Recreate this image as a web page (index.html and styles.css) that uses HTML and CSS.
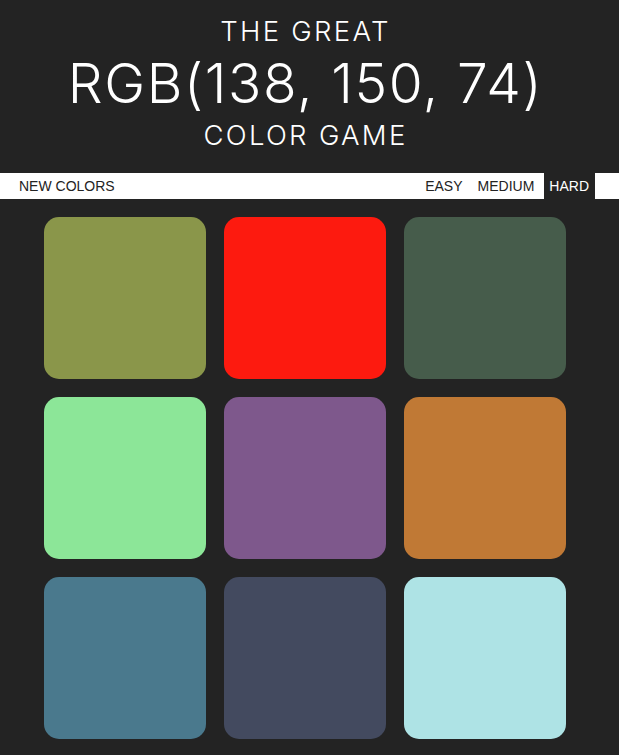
FILE: index.html
```html
<!DOCTYPE html>
<html lang="en">
<head>
<meta charset="utf-8">
<title>The Great Color Game</title>
<link rel="stylesheet" href="styles.css">
</head>
<body>
  <header class="header">
    <h1 class="title">
      <span class="title-small">THE GREAT</span>
      <span class="title-rgb">RGB(138, 150, 74)</span>
      <span class="title-small">COLOR GAME</span>
    </h1>
  </header>
  <nav class="stripe">
    <button class="btn">NEW COLORS</button>
    <div class="modes">
      <button class="btn">EASY</button>
      <button class="btn">MEDIUM</button>
      <button class="btn selected">HARD</button>
    </div>
  </nav>
  <main class="grid">
    <div class="square" style="background:#8a964a"></div>
    <div class="square" style="background:#fd1a0f"></div>
    <div class="square" style="background:#465c4b"></div>
    <div class="square" style="background:#8ce698"></div>
    <div class="square" style="background:#7e588c"></div>
    <div class="square" style="background:#c07935"></div>
    <div class="square" style="background:#4a798d"></div>
    <div class="square" style="background:#434a5f"></div>
    <div class="square" style="background:#aee3e5"></div>
  </main>
</body>
</html>
```
FILE: styles.css
```css
* { box-sizing: border-box; }
html, body { margin: 0; padding: 0; }
body {
  background: #232323;
  width: 619px;
  height: 755px;
  overflow: hidden;
}
.header {
  height: 173px;
  padding: 14px 8px 0 0;
  color: #ffffff;
  text-align: center;
  font-family: Inter, "DejaVu Sans", sans-serif;
  font-weight: 300;
}
.title { margin: 0; font-weight: 300; }
.title-small {
  display: block;
  font-size: 27.5px;
  line-height: 34px;
  letter-spacing: 2.3px;
}
.title-rgb {
  display: block;
  font-size: 55px;
  line-height: 70px;
  letter-spacing: 1.6px;
}
.stripe {
  display: flex;
  justify-content: space-between;
  align-items: stretch;
  height: 26px;
  background: #ffffff;
  padding: 0 24px 0 14px;
}
.modes { display: flex; gap: 4px; }
.btn {
  border: none;
  background: none;
  margin: 0;
  padding: 0 6px 0 5px;
  height: 100%;
  font-family: "Liberation Sans", Arial, sans-serif;
  font-size: 14px;
  color: #232323;
  cursor: pointer;
}
.btn.selected { background: #232323; color: #ffffff; }
.grid {
  display: grid;
  grid-template-columns: repeat(3, 162px);
  grid-auto-rows: 162px;
  gap: 18px;
  margin: 18px 0 0 44px;
}
.square { border-radius: 15px; }
```
